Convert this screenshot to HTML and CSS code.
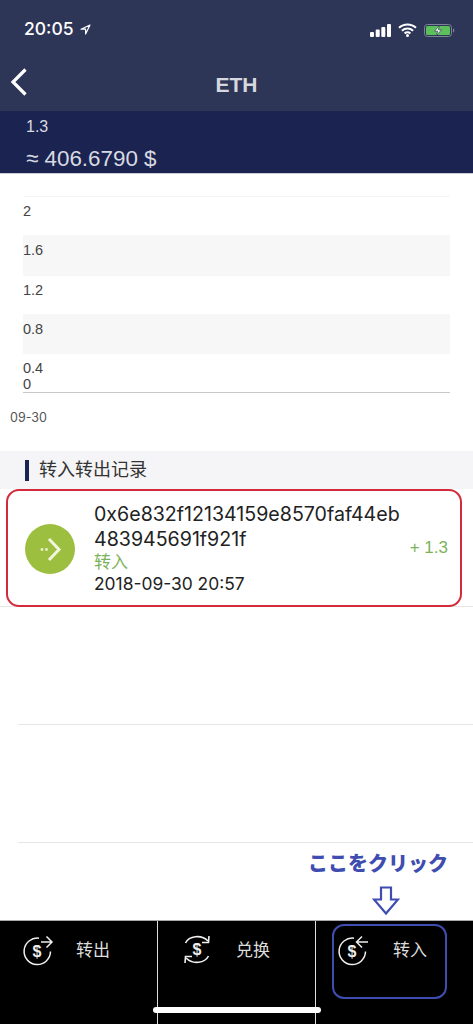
FILE: index.html
```html
<!DOCTYPE html>
<html lang="zh">
<head>
  <meta charset="UTF-8" />
  <meta name="viewport" content="width=device-width, initial-scale=1.0"/>
  <title>ETH</title>
  <link rel="stylesheet" href="styles.css">
</head>
<body>
  <div class="screen">
    <header class="top">
      <div class="status">
        <div class="status-time">
          <span>20:05</span>
          <svg width="11" height="11" viewBox="0 0 11 11"><path d="M10 1 1 5.2h4.600V10z" fill="none" stroke="#fff" stroke-width="1.200" stroke-linejoin="round"/></svg>
        </div>
        <div class="status-icons">
          <svg width="21" height="13" viewBox="0 0 21 13"><rect x="0" y="8" width="4" height="5" rx="1" fill="#fff"/><rect x="5.700" y="5.500" width="4" height="7.500" rx="1" fill="#fff"/><rect x="11.300" y="3" width="4" height="10" rx="1" fill="#fff"/><rect x="17" y="0" width="4" height="13" rx="1" fill="#fff"/></svg>
          <svg width="19" height="14" viewBox="0 0 19 14"><path d="M1 4.800a12.300 12.300 0 0 1 17 0M3.900 7.800a8.200 8.200 0 0 1 11.200 0M6.600 10.500a4.200 4.200 0 0 1 5.800 0" fill="none" stroke="#fff" stroke-width="2"/><circle cx="9.500" cy="12.400" r="1.500" fill="#fff"/></svg>
          <svg width="31" height="13" viewBox="0 0 31 13"><rect x="0.500" y="0.500" width="27" height="12" rx="3" fill="none" stroke="#7b8494"/><rect x="2" y="2" width="24" height="9" rx="1.500" fill="#5cc05a"/><path d="M29 4.500v4c.8-.3 1.300-1 1.300-2s-.5-1.700-1.300-2z" fill="#7b8494"/><path d="M15.500 1.500 10.500 7.200h3.200l-1.200 4.300 5-5.700h-3.200z" fill="#fff" stroke="#2e3658" stroke-width=".7"/></svg>
        </div>
      </div>
      <div class="nav">
        <svg class="nav-back" width="20" height="30" viewBox="0 0 20 30"><path d="M17.500 2.500 5 15l12.500 12.500" fill="none" stroke="#fff" stroke-width="3.200"/></svg>
        <h1 class="nav-title">ETH</h1>
      </div>
    </header>

    <section class="summary">
      <div class="summary-amount">1.3</div>
      <div class="summary-value">≈ 406.6790 $</div>
    </section>

    <section class="chart">
      <div class="band"><span>2</span></div>
      <div class="band band-grey"><span>1.6</span></div>
      <div class="band"><span>1.2</span></div>
      <div class="band band-grey"><span>0.8</span></div>
      <div class="band band-last"><span>0.4</span><span class="zero">0</span></div>
      <div class="chart-date">09-30</div>
    </section>

    <div class="records-head"><span class="records-title">转入转出记录</span></div>

    <div class="record">
      <div class="record-icon">
        <svg width="50" height="50" viewBox="0 0 50 50"><circle cx="25" cy="25" r="25" fill="#9dbf3f"/><circle cx="17" cy="25.500" r="1.400" fill="#e8f0cc"/><circle cx="21.500" cy="25.500" r="1.400" fill="#e8f0cc"/><path d="M24 15 34 25.500 24 36" fill="none" stroke="#f2f6df" stroke-width="3"/></svg>
      </div>
      <div class="record-body">
        <div class="record-hash">0x6e832f12134159e8570faf44eb<br>483945691f921f</div>
        <div class="record-type">转入</div>
        <div class="record-time">2018-09-30 20:57</div>
      </div>
      <div class="record-amount">+ 1.3</div>
    </div>
    <div class="empty-row"></div>
    <div class="empty-row"></div>
    <div class="note-area"></div>

    <nav class="tabs">
      <div class="tab tab-out">
        <svg width="32" height="31" viewBox="0 0 32 31"><path d="M17 3.200A13.200 13.200 0 1 0 28.500 16.500" fill="none" stroke="#eee" stroke-width="1.500"/><path d="M19 7h10.500M24.500 1.500 30 7l-5.500 5.500" fill="none" stroke="#eee" stroke-width="1.500"/><text x="15" y="21.500" class="tab-dollar">$</text></svg>
        <span>转出</span>
      </div>
      <div class="tab tab-swap">
        <svg width="30" height="33" viewBox="0 0 30 33"><path d="M3.500 10C7 3 19 1 26 8" fill="none" stroke="#eee" stroke-width="1.600"/><path d="M20 9.500l6.500 0 .5-6.500" fill="none" stroke="#eee" stroke-width="1.600"/><path d="M26.500 23C23 30 11 32 4 25" fill="none" stroke="#eee" stroke-width="1.600"/><path d="M10 23.500l-6.500 0-.5 6.500" fill="none" stroke="#eee" stroke-width="1.600"/><text x="15" y="21.500" class="tab-dollar">$</text></svg>
        <span>兑换</span>
      </div>
      <div class="tab tab-in">
        <svg width="32" height="31" viewBox="0 0 32 31"><path d="M17 3.200A13.200 13.200 0 1 0 28.500 16.500" fill="none" stroke="#eee" stroke-width="1.500"/><path d="M31 7H20M25 1.500 19.500 7l5.500 5.500" fill="none" stroke="#eee" stroke-width="1.500"/><text x="15" y="21.500" class="tab-dollar">$</text></svg>
        <span>转入</span>
      </div>
      <div class="home-bar"></div>
    </nav>

    <!-- annotations drawn over the screenshot -->
    <div class="mark-record"></div>
    <div class="mark-label">ここをクリック</div>
    <svg class="mark-arrow" width="28" height="30" viewBox="0 0 28 30"><path d="M9 1.500h10v12h7L14 27.500 2 13.500h7z" fill="none" stroke="#3f4db0" stroke-width="2.200"/></svg>
    <div class="mark-tab"></div>
  </div>
</body>
</html>
```

FILE: styles.css
```css
* {
  box-sizing: border-box;
}
body {
  margin: 0;
  background-color: #fff;
  font-family: "Liberation Sans", "Noto Sans CJK SC", sans-serif;
  color: #2a2a2a;
  overflow: hidden;
}
.screen {
  position: relative;
  width: 473px;
  height: 1024px;
  display: flex;
  flex-direction: column;
  overflow: hidden;
}
.top {
  height: 111px;
  background-color: #2e3658;
  color: #fff;
}
.status {
  height: 60px;
  padding: 18px 0 0 24px;
  display: flex;
  justify-content: space-between;
  align-items: flex-start;
}
.status-time {
  display: flex;
  align-items: center;
  gap: 6px;
  font-family: "Inter", sans-serif;
  font-size: 17.500px;
  font-weight: 500;
  line-height: 22px;
}
.status-icons {
  display: flex;
  align-items: center;
  gap: 7px;
  padding: 5px 18px 0 0;
}
.nav {
  height: 51px;
  display: flex;
  align-items: center;
  justify-content: center;
  position: relative;
  padding-bottom: 2px;
}
.nav-back {
  position: absolute;
  left: 8px;
  top: 7px;
}
.nav-title {
  margin: 0;
  font-size: 21px;
  font-weight: bold;
  color: #d6d8df;
}
.summary {
  height: 63px;
  padding: 5px 0 0 26px;
  background-color: #1b2450;
  color: #d8dae2;
  border-bottom: 1px solid #c9cbd6;
}
.summary-amount {
  font-size: 16px;
  line-height: 21px;
}
.summary-value {
  margin-top: 10px;
  font-size: 22.400px;
  line-height: 23px;
}
.chart {
  height: 277px;
  padding: 22px 23px 0;
  position: relative;
  color: #444;
  font-size: 14.500px;
}
.band {
  height: 39px;
  padding-top: 5px;
  line-height: 18px;
  border-top: 1px solid #f5f5f5;
}
.band-grey {
  height: 40px;
  padding-top: 6px;
  background-color: #f7f7f7;
  border-top: none;
}
.band-last {
  height: 39px;
  border-top: none;
  border-bottom: 1.500px solid #c8c8c8;
  position: relative;
}
.band-last span {
  display: block;
}
.zero {
  position: absolute;
  left: 0;
  top: 21px;
}
.chart-date {
  position: absolute;
  left: 10px;
  top: 236px;
  font-family: "Inter", sans-serif;
  font-size: 12.500px;
  color: #555;
}
.records-head {
  height: 38px;
  padding-left: 25px;
  display: flex;
  align-items: center;
  background-color: #f5f5f7;
}
.records-title {
  padding-left: 10px;
  border-left: 4px solid #1b2450;
  font-size: 18px;
  line-height: 21px;
  color: #333;
}
.record {
  height: 118px;
  padding: 0 25px;
  display: flex;
  align-items: center;
  border-bottom: 1px solid #e6e6e6;
}
.record-icon {
  width: 69px;
  height: 50px;
  flex-shrink: 0;
  margin-top: 2px;
}
.record-body {
  flex: 1;
  padding-top: 1px;
  font-family: "Inter", "Noto Sans CJK SC", sans-serif;
  font-size: 19.600px;
  line-height: 25px;
  color: #222;
}
.record-type {
  font-size: 17px;
  line-height: 20px;
  color: #7cb35a;
}
.record-time {
  font-size: 17.400px;
  line-height: 23px;
}
.record-amount {
  font-size: 17px;
  color: #7cb35a;
}
.empty-row {
  height: 118px;
  margin-left: 18px;
  border-bottom: 1px solid #e6e6e6;
}
.empty-row:last-of-type {
  height: 117px;
}
.note-area {
  flex: 1;
}
.tabs {
  position: relative;
  height: 104px;
  display: grid;
  grid-template-columns: 157px 158px 158px;
  background-color: #000;
  border-top: 1px solid #aaa;
  color: #ddd;
}
.tab {
  height: 100%;
  display: flex;
  align-items: flex-start;
  font-size: 17px;
  line-height: 20px;
}
.tab + .tab {
  border-left: 1.500px solid #ddd;
}
.tab span {
  padding-top: 6px;
}
.tab-out {
  padding: 14px 0 0 22px;
  gap: 22px;
}
.tab-swap {
  padding: 12px 0 0 24px;
  gap: 24px;
}
.tab-swap span {
  padding-top: 8px;
}
.tab-in {
  padding: 14px 0 0 21px;
  gap: 24px;
}
.tab-dollar {
  fill: #eee;
  font-size: 16px;
  font-weight: bold;
  text-anchor: middle;
}
.home-bar {
  position: absolute;
  left: 153px;
  top: 86px;
  width: 168px;
  height: 6px;
  border-radius: 3px;
  background-color: #fff;
}
.mark-record {
  position: absolute;
  left: 6px;
  top: 489px;
  width: 456px;
  height: 118px;
  border: 2.500px solid #d42a3c;
  border-radius: 13px;
}
.mark-label {
  position: absolute;
  left: 308px;
  top: 851px;
  font-family: "Noto Sans CJK JP", sans-serif;
  font-size: 20px;
  font-weight: 900;
  line-height: 24px;
  color: #3f4db0;
}
.mark-arrow {
  position: absolute;
  left: 372px;
  top: 886px;
}
.mark-tab {
  position: absolute;
  left: 332px;
  top: 924px;
  width: 115px;
  height: 75px;
  border: 2.500px solid #3f4db0;
  border-radius: 12px;
}
```
